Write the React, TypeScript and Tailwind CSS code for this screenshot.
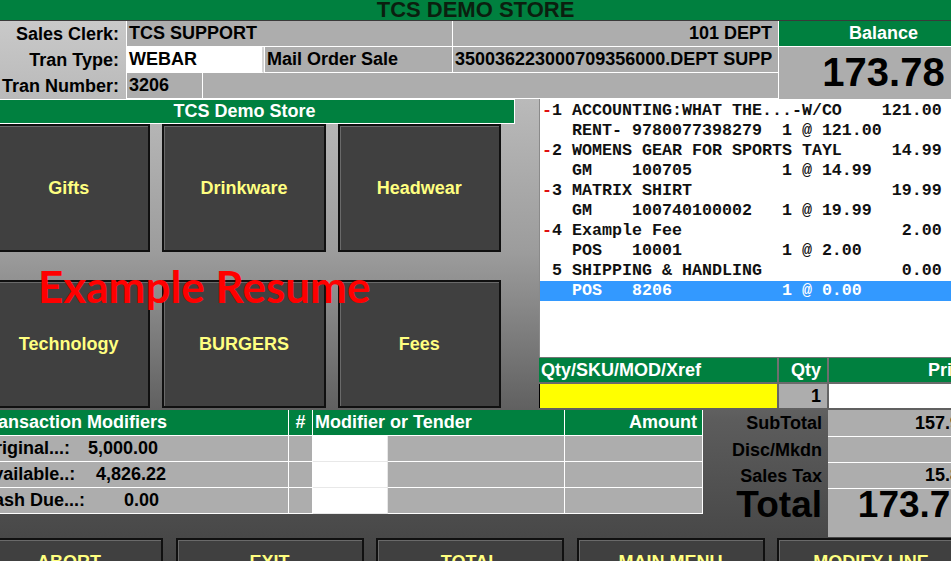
const mono = "font-['Liberation_Mono','Courier_New',monospace]";
const cell = "bg-[#adadad] border-l border-b border-white";
const hdr = "bg-[#00803f] text-white border-r border-b border-white";
const grayCell = "bg-[#adadad] border-r border-b border-white";

// build a 39 column receipt line, left text + right aligned amount
const pad = (left: string, right = "") =>
  left + " ".repeat(Math.max(1, 39 - left.length - right.length)) + right;

const lines: { mark: boolean; text: string; selected?: boolean }[] = [
  { mark: true, text: pad("1 ACCOUNTING:WHAT THE...-W/CO", "121.00") },
  { mark: false, text: "  RENT- 9780077398279  1 @ 121.00" },
  { mark: true, text: pad("2 WOMENS GEAR FOR SPORTS TAYL", "14.99") },
  { mark: false, text: "  GM    100705         1 @ 14.99" },
  { mark: true, text: pad("3 MATRIX SHIRT", "19.99") },
  { mark: false, text: "  GM    100740100002   1 @ 19.99" },
  { mark: true, text: pad("4 Example Fee", "2.00") },
  { mark: false, text: "  POS   10001          1 @ 2.00" },
  { mark: false, text: pad("5 SHIPPING & HANDLING", "0.00") },
  { mark: false, text: "  POS   8206           1 @ 0.00", selected: true },
];

const tiles = ["Gifts", "Drinkware", "Headwear", "Technology", "BURGERS", "Fees"];

const modifiers = [
  { label: "Original...:", value: "5,000.00", w: "w-[107px]" },
  { label: "Available..:", value: "4,826.22", w: "w-[115px]" },
  { label: "Cash Due...:", value: "0.00", w: "w-[143px]" },
];

const buttons = ["ABORT", "EXIT", "TOTAL", "MAIN MENU", "MODIFY LINE"];

function Label({ children }: { children: React.ReactNode }) {
  return (
    <div className="w-[126px] shrink-0 text-right pr-[7px] leading-[26px]">{children}</div>
  );
}

export default function App() {
  return (
    <div className="relative w-[951px] h-[561px] overflow-hidden bg-[linear-gradient(to_bottom,#cdcdcd_0%,#9c9c9c_45%,#5c5c5c_75%,#444444_100%)] font-['Liberation_Sans',Arial,sans-serif] text-[18px] font-bold text-black">
      {/* store title */}
      <div className="h-[21px] bg-[#00803f] border-b border-[#3a3a3a] flex items-center justify-center text-[22px] leading-none text-[#0b1f0f]">
        TCS DEMO STORE
      </div>

      {/* clerk / tran info + balance */}
      <div className="flex h-[78px] w-max">
        <div className="w-[778px] flex flex-col">
          <div className="flex h-[26px]">
            <Label>Sales Clerk:</Label>
            <div className={`${cell} w-[326px] pl-[2px] leading-[25px]`}>TCS SUPPORT</div>
            <div className={`${cell} w-[326px] pr-[6px] text-right leading-[25px]`}>101 DEPT</div>
          </div>
          <div className="flex h-[26px]">
            <Label>Tran Type:</Label>
            <div className="w-[138px] bg-white border-l border-b border-white border-r-2 border-r-[#d6d6d6] pl-[2px] leading-[25px]">
              WEBAR
            </div>
            <div className={`${cell} w-[188px] pl-[2px] leading-[25px]`}>Mail Order Sale</div>
            <div className={`${cell} w-[326px] pl-[2px] leading-[25px]`}>350036223000709356000.DEPT SUPP</div>
          </div>
          <div className="flex h-[26px]">
            <Label>Tran Number:</Label>
            <div className={`${cell} w-[76px] pl-[2px] leading-[25px]`}>3206</div>
            <div className={`${cell} w-[576px]`} />
          </div>
        </div>
        <div className="w-[210px] shrink-0 flex flex-col">
          <div className="h-[26px] bg-[#00803f] text-white border-l border-b border-white text-center leading-[25px]">
            Balance
          </div>
          <div className="h-[52px] bg-[#adadad] border-l border-white flex items-center justify-center pb-[3px] text-[40px] leading-none">
            173.78
          </div>
        </div>
      </div>

      {/* department tiles + receipt */}
      <div className="flex h-[309px] w-max">
        <div className="w-[539px] shrink-0">
          <div className="-ml-[26px] w-[541px] h-[25px] bg-[#00803f] border border-white text-white text-center leading-[23px]">
            TCS Demo Store
          </div>
          <div className="-ml-[13px] w-[514px] grid grid-cols-3 gap-x-[12px] gap-y-[28px]">
            {tiles.map((t) => (
              <div
                key={t}
                className="h-[128px] bg-[#404040] border-2 border-[#101010] shadow-[inset_1px_1px_0_#6a6a6a] flex items-center justify-center text-[#ffff80]"
              >
                {t}
              </div>
            ))}
          </div>
        </div>

        <div className="w-[449px] shrink-0 flex flex-col">
          <div className={`h-[258px] bg-white border-l border-[#8a8a8a] pt-[2px] ${mono} text-[16.67px] font-bold`}>
            {lines.map((l, i) => (
              <div
                key={i}
                className={
                  l.selected
                    ? "h-[20px] leading-[20px] whitespace-pre pl-[2px] bg-[#3399ff] text-white"
                    : "h-[20px] leading-[20px] whitespace-pre pl-[2px] text-[#111]"
                }
              >
                <span className="text-[#e01010]">{l.mark ? "-" : " "}</span>
                {l.text}
              </div>
            ))}
          </div>
          <div className="mt-px flex gap-[2px] h-[24px]">
            <div className="w-[238px] bg-[#00803f] text-white pl-[2px] leading-[24px]">Qty/SKU/MOD/Xref</div>
            <div className="w-[48px] bg-[#00803f] text-white text-right pr-[6px] leading-[24px]">Qty</div>
            <div className="flex-1 bg-[#00803f] text-white text-right pr-[16px] leading-[24px]">Price</div>
          </div>
          <div className="mt-[2px] flex gap-[2px] h-[24px]">
            <div className="w-[238px] bg-[#ffff00] flex items-stretch">
              <div className="w-px bg-black" />
            </div>
            <div className="w-[48px] bg-[#adadad] text-right pr-[6px] leading-[24px]">1</div>
            <div className="flex-1 bg-white" />
          </div>
        </div>
      </div>

      {/* modifiers / tenders + totals */}
      <div className="flex h-[130px] pt-[2px] w-max">
        <div className="-ml-[21px] w-[724px] shrink-0">
          <div className="flex h-[26px] leading-[25px]">
            <div className={`${hdr} w-[310px] pl-[2px]`}>Transaction Modifiers</div>
            <div className={`${hdr} w-[24px] text-center`}>#</div>
            <div className={`${hdr} w-[252px] pl-[2px]`}>Modifier or Tender</div>
            <div className={`${hdr} w-[138px] text-right pr-[5px]`}>Amount</div>
          </div>
          {modifiers.map((m) => (
            <div key={m.label} className="flex h-[26px] leading-[25px]">
              <div className={`${grayCell} w-[310px] pl-[2px] flex`}>
                <span className={m.w}>{m.label}</span>
                <span>{m.value}</span>
              </div>
              <div className={`${grayCell} w-[24px]`} />
              <div className="w-[75px] bg-white border-r border-b border-[#e8e8e8]" />
              <div className={`${grayCell} w-[177px]`} />
              <div className={`${grayCell} w-[138px]`} />
            </div>
          ))}
        </div>

        <div className="w-[125px] shrink-0 text-right pr-[6px]">
          <div className="h-[27px] leading-[27px]">SubTotal</div>
          <div className="h-[26px] leading-[26px]">Disc/Mkdn</div>
          <div className="h-[26px] leading-[26px]">Sales Tax</div>
          <div className="h-[48px] text-[37px] leading-[31px]">Total</div>
        </div>
        <div className="w-[160px] shrink-0 h-[127px] bg-[#adadad] text-right">
          <div className="h-[27px] leading-[26px] border-b border-white pr-[18px]">157.98</div>
          <div className="h-[26px] leading-[25px] border-b border-white pr-[18px]" />
          <div className="h-[26px] leading-[25px] border-b border-white pr-[18px]">15.80</div>
          <div className="h-[48px] text-[37px] leading-[31px] pr-[17px]">173.78</div>
        </div>
      </div>

      {/* function keys */}
      <div className="-ml-[25px] flex gap-[12.5px] w-max">
        {buttons.map((b) => (
          <div
            key={b}
            className="w-[188px] h-[48px] bg-[#404040] border-2 border-[#101010] shadow-[inset_1px_1px_0_#6a6a6a] flex items-center justify-center text-[#ffff80]"
          >
            {b}
          </div>
        ))}
      </div>

      {/* watermark */}
      <div className="absolute left-[38px] top-[265px] z-10 text-[#ff0000] text-[44px] leading-[43px] font-['Lato',sans-serif] font-bold">
        Example Resume
      </div>
    </div>
  );
}
